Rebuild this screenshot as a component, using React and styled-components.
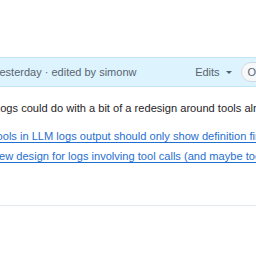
import React from "react";
import styled, { createGlobalStyle } from "styled-components";

const GlobalStyle = createGlobalStyle`
  html, body {
    margin: 0;
    padding: 0;
    background: #ffffff;
  }
  body {
    font-family: "Liberation Sans", Arial, sans-serif;
    -webkit-font-smoothing: antialiased;
  }
`;

const Page = styled.div`
  width: 256px;
  height: 256px;
  overflow: hidden;
  padding-top: 57px;
  box-sizing: border-box;
`;

const Header = styled.div`
  height: 28px;
  display: flex;
  align-items: center;
  background: #ddf4ff;
  border-top: 1px solid #c4e5f7;
  border-bottom: 1px solid #c4e5f7;
  color: #59636e;
  font-size: 11px;
  white-space: nowrap;
  overflow: hidden;
`;

const Meta = styled.span`
  margin-left: ${({ $shift }) => $shift}px;
  flex: 1;
`;

const Edits = styled.span`
  display: flex;
  align-items: center;
  gap: 6px;
  margin-right: 9px;
`;

const Caret = styled.span`
  width: 0;
  height: 0;
  border-left: 3px solid transparent;
  border-right: 3px solid transparent;
  border-top: 3px solid #59636e;
`;

const Pill = styled.span`
  height: 18px;
  padding: 0 6px;
  margin-right: -31px;
  display: flex;
  align-items: center;
  border: 1px solid #d1d9e0;
  border-radius: 10px;
  background: #f6f8fa;
  color: #59636e;
`;

const Body = styled.div`
  font-size: 11.1px;
  color: #1f2328;
  white-space: nowrap;
  overflow: hidden;
  padding-top: 13px;
  height: 119px;
  box-sizing: border-box;
  border-bottom: 1px solid #e3e8ec;
`;

const Para = styled.p`
  margin: 0 0 12px ${({ $shift }) => $shift}px;
  line-height: 16px;
`;

const List = styled.ul`
  list-style: none;
  margin: 0;
  padding: 0;
  display: flex;
  flex-direction: column;
  gap: 4px;
`;

const Item = styled.li`
  margin-left: ${({ $shift }) => $shift}px;
  line-height: 16px;
`;

const Link = styled.a`
  color: #1f6fd0;
  text-decoration: underline;
  text-underline-offset: 2px;
`;

export default function App() {
  return (
    <>
      <GlobalStyle />
      <Page>
        <Header>
          <Meta $shift={-6}>yesterday · edited by simonw</Meta>
          <Edits>
            Edits
            <Caret />
          </Edits>
          <Pill>Owner</Pill>
        </Header>
        <Body>
          <Para $shift={-6}>
            Logs could do with a bit of a redesign around tools already
          </Para>
          <List>
            <Item $shift={-9}>
              <Link href="#">
                Tools in LLM logs output should only show definition first time
              </Link>
            </Item>
            <Item $shift={-9}>
              <Link href="#">
                New design for logs involving tool calls (and maybe tool classes)
              </Link>
            </Item>
          </List>
        </Body>
      </Page>
    </>
  );
}
